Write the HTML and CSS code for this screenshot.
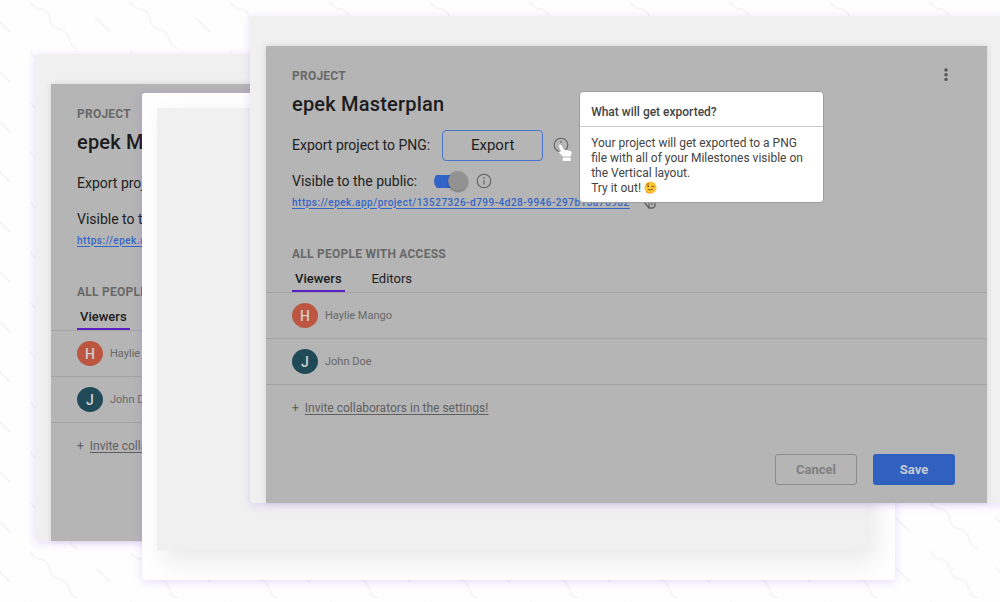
FILE: index.html
```html
<!DOCTYPE html>
<html lang="en">
<head>
<meta charset="utf-8">
<title>epek Masterplan</title>
<link rel="stylesheet" href="styles.css">
</head>
<body>
<svg class="defs" width="0" height="0" aria-hidden="true">
  <symbol id="info" viewBox="0 0 16 16"><circle cx="8" cy="8" r="6.8" fill="none" stroke="currentColor" stroke-width="1.1"/><path d="M8 7.2v4.2" stroke="currentColor" stroke-width="1.2"/><circle cx="8" cy="4.9" r=".8" fill="currentColor"/></symbol>
  <symbol id="copy" viewBox="0 0 16 16"><path d="M2 8l5 6V4M7 9l-2-3M7 14h4l2-2V5M10 5v6" fill="none" stroke="currentColor" stroke-width="1.3" stroke-linejoin="round"/></symbol>
</svg>
<main class="stage">
  <svg class="backdrop" aria-hidden="true">
    <defs>
      <pattern id="confetti" width="100" height="50" patternUnits="userSpaceOnUse">
        <g fill="none" stroke="#f6f6f6" stroke-width="2" stroke-linecap="round">
          <path d="M31 2C33 8 37 9 41 9C48 11 49 15 50 20C51 26 54 28 59 29C66 30 68 34 69 39C71 46 74 47 77 48"/>
          <path d="M96 18l14 14M-4 18l14 14"/>
        </g>
      </pattern>
    </defs>
    <rect width="100%" height="100%" fill="url(#confetti)"/>
  </svg>

  <section class="window window-back">
    <div class="dialog">
      <header class="head">
        <div>
          <p class="eyebrow">PROJECT</p>
          <h2 class="title">epek Masterplan</h2>
        </div>
      </header>
      <div class="row row-export"><span class="label">Export project to PNG:</span></div>
      <div class="row row-public"><label class="label" for="public-back">Visible to the public:</label><input class="switch" id="public-back" type="checkbox" checked></div>
      <div class="row row-link"><a class="url" href="#">https://epek.app/project/13527326-d799-4d28-9946-297b13a76982</a></div>
      <h3 class="eyebrow people-title">ALL PEOPLE WITH ACCESS</h3>
      <nav class="tabs"><button class="tab active" type="button">Viewers</button></nav>
      <ul class="people">
        <li class="person"><span class="avatar coral">H</span>Haylie Mango</li>
        <li class="person"><span class="avatar teal">J</span>John Doe</li>
      </ul>
      <p class="invite"><span class="plus">+</span><a class="invite-link" href="#">Invite collaborators in the settings!</a></p>
    </div>
  </section>

  <section class="window window-middle"><div class="blank"></div></section>

  <section class="window window-front">
    <div class="dialog">
      <header class="head">
        <div>
          <p class="eyebrow">PROJECT</p>
          <h1 class="title">epek Masterplan</h1>
        </div>
        <button class="more" type="button" aria-label="More options"><svg width="6" height="14" viewBox="0 0 6 14"><circle cx="3" cy="2" r="1.7"/><circle cx="3" cy="6.700" r="1.7"/><circle cx="3" cy="11.400" r="1.7"/></svg></button>
      </header>
      <div class="row row-export">
        <span class="label">Export project to PNG:</span>
        <button class="export" type="button">Export</button>
        <span class="hint">
          <svg class="icon" aria-hidden="true"><use href="#info"/></svg>
          <svg class="hand" viewBox="0 0 16 18" aria-hidden="true"><path d="M1.200.8Q2.600-.4 3.600 1.200L5.500 5.400L12.300 7Q13.800 7.500 13.500 9.200L12.700 12.500H5L1 8.600Q.7 7.300 2.200 7.300L3 7.400L1 2.400Q.6 1.400 1.200.8ZM4.800 13.500H12.600V17H4.800Z" fill="#fff"/></svg>
          <aside class="tooltip" role="tooltip">
            <h4 class="tip-title">What will get exported?</h4>
            <p class="tip-text">Your project will get exported to a PNG file with all of your Milestones visible on the Vertical layout.<br>Try it out! <svg class="wink" viewBox="0 0 14 14" role="img" aria-label="Winking face"><circle cx="7" cy="7" r="6.500" fill="#fdc633"/><path d="M2 10a6 6 0 0 0 10 0a6.500 6.500 0 0 1-10 2z" fill="#f19a2c"/><circle cx="4.500" cy="5.600" r=".9" fill="#6d4320"/><path d="M8.300 5.800q1.300-1 2.700.2M2.900 3.700q1-1 2.200-.7M4.500 9.200q2.500 1.500 5-.4" fill="none" stroke="#6d4320" stroke-width=".9" stroke-linecap="round"/></svg></p>
          </aside>
        </span>
      </div>
      <div class="row row-public">
        <label class="label" for="public-front">Visible to the public:</label>
        <input class="switch" id="public-front" type="checkbox" checked>
        <svg class="icon" aria-hidden="true"><use href="#info"/></svg>
      </div>
      <div class="row row-link"><a class="url" href="#">https://epek.app/project/13527326-d799-4d28-9946-297b13a76982</a><svg class="icon" aria-hidden="true"><use href="#copy"/></svg></div>
      <h3 class="eyebrow people-title">ALL PEOPLE WITH ACCESS</h3>
      <nav class="tabs"><button class="tab active" type="button">Viewers</button><button class="tab" type="button">Editors</button></nav>
      <ul class="people">
        <li class="person"><span class="avatar coral">H</span>Haylie Mango</li>
        <li class="person"><span class="avatar teal">J</span>John Doe</li>
      </ul>
      <p class="invite"><span class="plus">+</span><a class="invite-link" href="#">Invite collaborators in the settings!</a></p>
      <footer class="actions"><button class="btn cancel" type="button">Cancel</button><button class="btn save" type="button">Save</button></footer>
    </div>
  </section>
</main>
</body>
</html>
```
FILE: styles.css
```css
* { box-sizing: border-box; }
body { margin: 0; font-family: Roboto, "Liberation Sans", sans-serif; color: #222; background: #fefefe; }
p, h1, h2, h3, h4, ul { margin: 0; padding: 0; }
button { font: inherit; color: inherit; background: none; border: 0; padding: 0; cursor: pointer; }
.defs { position: absolute; }
.stage { position: relative; height: 100vh; min-height: 602px; overflow: hidden; }
.backdrop { display: block; width: 100%; height: 100%; }

.window { position: absolute; width: 75.3%; border-radius: 3px; background: #f0f0f0; box-shadow: 0 2px 10px rgba(120, 60, 255, 0.18); }
.window-back { left: 3.5%; top: 54px; padding: 30px 16px 0; }
.window-middle { left: 14.2%; top: 93px; padding: 15px 29px 30px 15px; background: #fefefe; }
.window-front { left: 25%; top: 16px; padding: 30px 16px 0; }
.blank { height: 442px; background: #f0f0f0; box-shadow: 8px 10px 24px rgba(0, 0, 0, 0.09); }

.dialog { min-height: 457px; padding: 20px 0 18px; background: #b5b5b5; box-shadow: 0 0 6px rgba(0, 0, 0, 0.12); }
.head { display: flex; justify-content: space-between; align-items: flex-start; padding: 0 38px 0 26px; }
.eyebrow { font-size: 12px; line-height: 20px; font-weight: 700; letter-spacing: 0.02em; color: #686868; }
.title { margin-top: 4px; font-size: 20px; line-height: 28px; font-weight: 500; letter-spacing: 0.01em; color: #1c1c1e; }
.more { display: flex; padding: 2px 0; fill: #555; }
.row { display: flex; align-items: center; padding: 0 26px; }
.row-export { height: 32px; margin-top: 11px; gap: 12px; }
.row-public { height: 24px; margin-top: 8px; gap: 8px; }
.row-link { height: 18px; gap: 12px; }
.label { font-size: 14px; line-height: 18px; white-space: nowrap; }
.export { width: 101px; height: 31px; flex: none; border: 1px solid #4a74cc; border-radius: 4px; font-size: 15px; }
.hint { position: relative; display: flex; margin-left: -2px; }
.icon { width: 16px; height: 16px; flex: none; color: #606060; }
.hand { position: absolute; left: 5px; top: 7px; width: 16px; height: 18px; }
.switch { appearance: none; width: 34px; height: 20px; flex: none; margin: 0 0 0 9px; background: linear-gradient(#3163c8, #3163c8) left center / 28px 13px no-repeat; border-radius: 10px; position: relative; }
.switch::after { content: ""; position: absolute; right: 0; top: 0; width: 20px; height: 20px; border-radius: 50%; background: #929292; box-shadow: 0 1px 2px rgba(0, 0, 0, 0.4); }
.url { font-size: 10px; letter-spacing: 0.05em; font-weight: 500; color: #3566c6; white-space: nowrap; text-underline-offset: 2px; }
.people-title { margin: 33px 26px 0; }
.tabs { display: flex; gap: 24px; padding: 0 26px; border-bottom: 1px solid #a3a3a3; }
.tab { height: 28px; padding: 3px 3px 0; border-bottom: 2px solid transparent; font-size: 13px; color: #1c1c1e; }
.tab.active { border-color: #5b20c4; font-weight: 500; }
.people { list-style: none; }
.person { display: flex; align-items: center; gap: 7px; height: 46px; padding: 0 26px; border-bottom: 1px solid #a3a3a3; font-size: 11px; color: #686868; }
.avatar { display: flex; align-items: center; justify-content: center; width: 26px; height: 25px; border-radius: 50%; font-size: 14px; font-weight: 500; color: #cfcfcf; }
.coral { background: #bd5640; }
.teal { background: #204a58; }
.invite { display: flex; gap: 6px; padding: 14px 26px 0; font-size: 12px; line-height: 18px; color: #606060; }
.invite-link { color: inherit; text-underline-offset: 2px; }
.actions { display: flex; justify-content: flex-end; gap: 16px; margin-top: 37px; padding: 0 32px; }
.btn { width: 82px; height: 31px; border-radius: 3px; font-size: 13px; font-weight: 700; }
.cancel { border: 1px solid #8c8c8c; color: #808080; }
.save { background: #3060c0; color: #c8cbd2; }

.tooltip { position: absolute; left: 26px; top: -46px; width: 245px; border: 1px solid #9c9c9c; border-radius: 4px; background: #fff; color: #444; }
.tip-title { padding: 11px 11px 5px; font-size: 12px; line-height: 18px; font-weight: 500; border-bottom: 1px solid #c8c8c8; }
.tip-text { padding: 9px 8px 6px 11px; font-size: 12px; line-height: 15px; }
.wink { width: 13px; height: 13px; vertical-align: -2px; }
```
